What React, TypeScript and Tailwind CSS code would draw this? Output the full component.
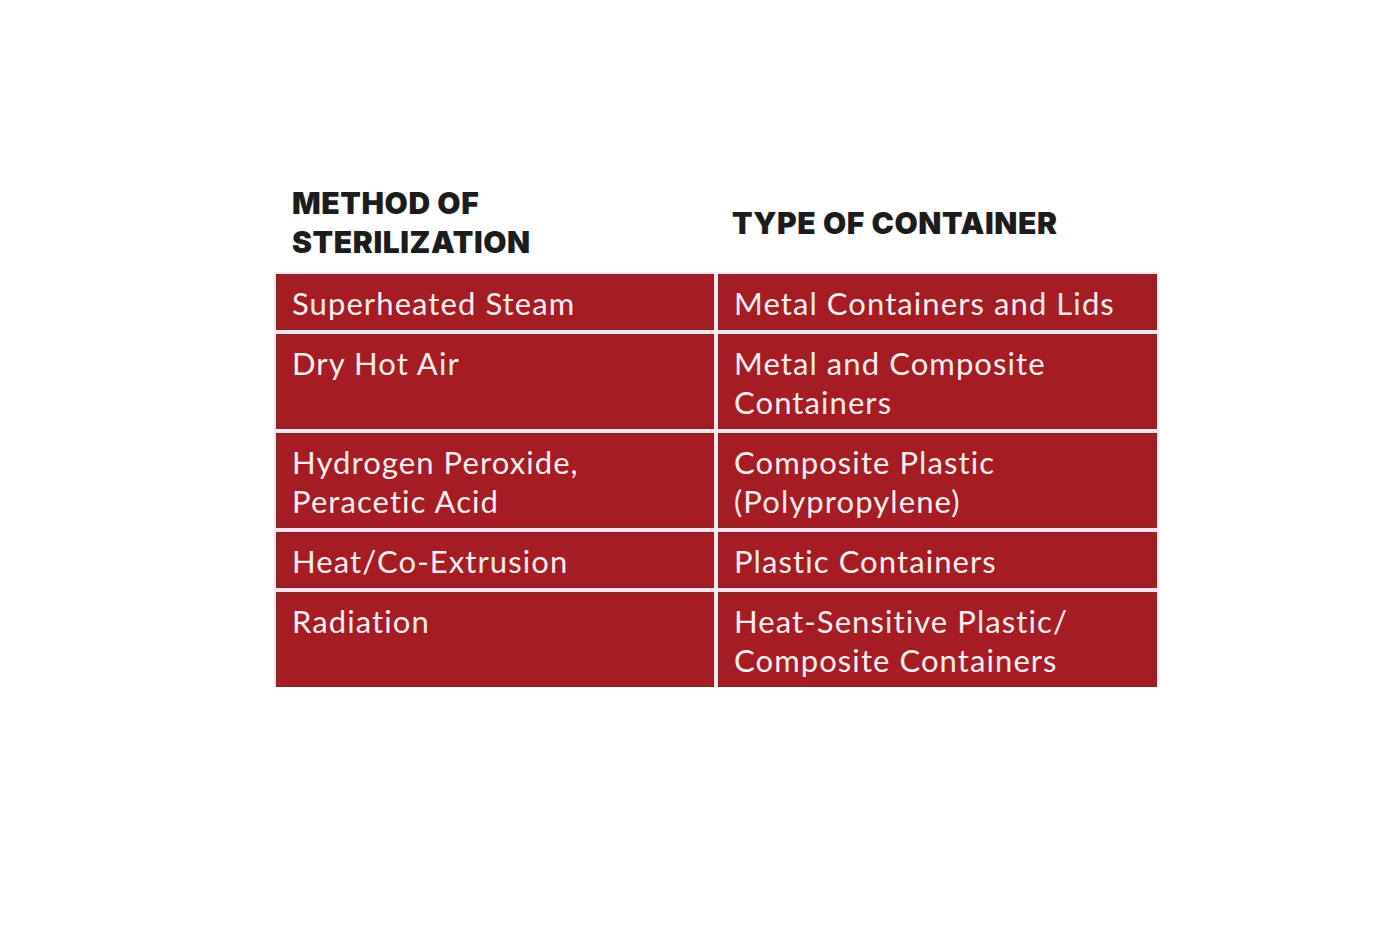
const rows: [string[], string[]][] = [
  [["Superheated Steam"], ["Metal Containers and Lids"]],
  [["Dry Hot Air"], ["Metal and Composite", "Containers"]],
  [["Hydrogen Peroxide,", "Peracetic Acid"], ["Composite Plastic", "(Polypropylene)"]],
  [["Heat/Co-Extrusion"], ["Plastic Containers"]],
  [["Radiation"], ["Heat-Sensitive Plastic/", "Composite Containers"]],
];

function Cell({ lines }: { lines: string[] }) {
  return (
    <div className="bg-[#a51c23] border border-[#7a2a24] pl-[15px] pr-3 pt-[9px] pb-[6px] text-[31px] leading-[39px] tracking-[0.035em] text-[#fdeef4]">
      {lines.map((l) => (
        <div key={l}>{l}</div>
      ))}
    </div>
  );
}

export default function App() {
  return (
    <main className="min-h-screen bg-white pt-[184px] pl-[274px]" style={{ fontFamily: "Lato, 'Open Sans', sans-serif" }}>
      {/* header */}
      <div
        className="grid grid-cols-[441px_441px] items-center pb-[10px] text-[30px] leading-[39px] font-black tracking-[0.02em] text-[#1c1c1c] uppercase"
        style={{ fontFamily: "Inter, 'Open Sans', sans-serif" }}
      >
        <div className="pl-[18px]">
          <div>Method of</div>
          <div>Sterilization</div>
        </div>
        <div className="pl-[17px]">Type of Container</div>
      </div>

      {/* table */}
      <div className="inline-grid grid-cols-[438px_439px] gap-x-[4px] gap-y-[4px] bg-[#fbe4ee] p-[2px] pb-0">
        {rows.map(([a, b], i) => (
          <div key={i} className="contents">
            <Cell lines={a} />
            <Cell lines={b} />
          </div>
        ))}
      </div>
    </main>
  );
}
